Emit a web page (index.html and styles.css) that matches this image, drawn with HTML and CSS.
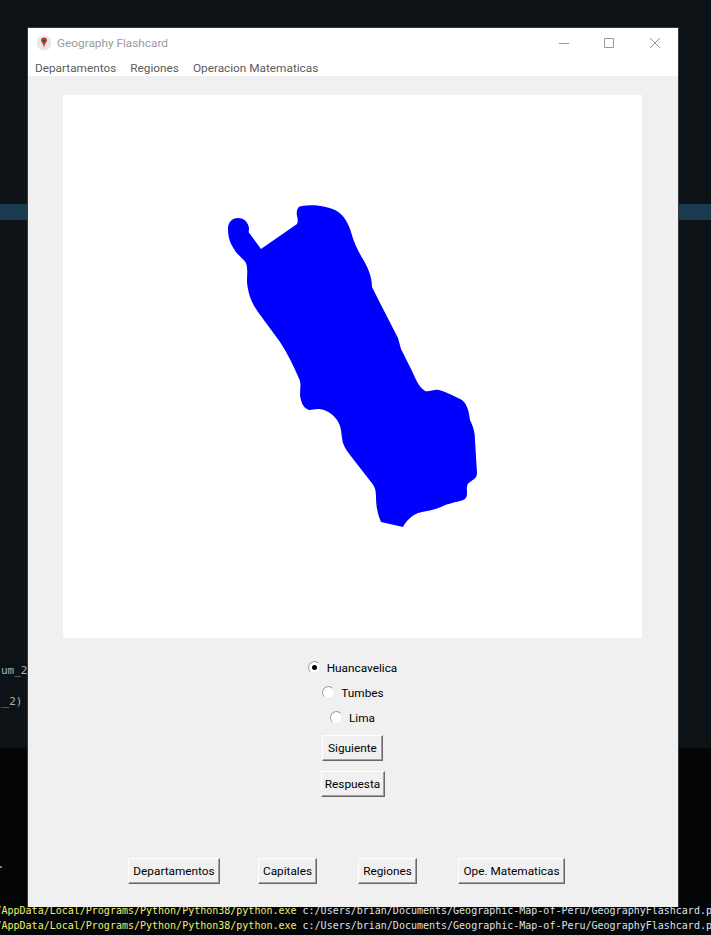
FILE: index.html
```html
<!DOCTYPE html>
<html lang="es">
<head>
<meta charset="utf-8">
<title>Geography Flashcard</title>
<link rel="stylesheet" href="styles.css">
</head>
<body>
<div class="desktop">
  <div class="editor">
    <div class="selection-line"></div>
    <div class="code code-a">um_2</div>
    <div class="code code-b"><span class="red">_</span>_2)<span class="blue">-</span></div>
  </div>
  <div class="terminal">
    <div class="prompt-mark"></div>
    <div class="term-line"><span class="yellow">/AppData/Local/Programs/Python/Python38/python.exe</span> c:/Users/brian/Documents/Geographic-Map-of-Peru/GeographyFlashcard.py</div>
    <div class="term-line"><span class="yellow">/AppData/Local/Programs/Python/Python38/python.exe</span> c:/Users/brian/Documents/Geographic-Map-of-Peru/GeographyFlashcard.py</div>
  </div>
</div>

<div class="window">
  <header class="titlebar">
    <svg class="app-icon" width="16" height="16" viewBox="0 0 16 16" aria-hidden="true">
      <circle cx="8" cy="8" r="7.5" fill="#e8e8e8"/>
      <path d="M5 5c0-1.500 1.300-2.500 3-2.500s3 1 3 2.500c0 2-1.500 3-2.500 5.500L8 13l-.5-2.500C6.500 8 5 7 5 5z" fill="#d8301f"/>
      <circle cx="8" cy="5.500" r="1.700" fill="#0f7f90"/>
      <circle cx="8" cy="5.500" r=".7" fill="#0a2a35"/>
    </svg>
    <span class="title-text">Geography Flashcard</span>
    <div class="window-controls">
      <svg class="ctl ctl-min" width="12" height="12" viewBox="0 0 12 12" aria-hidden="true"><path d="M1 6.500h10" stroke="#999" stroke-width="1"/></svg>
      <svg class="ctl ctl-max" width="12" height="12" viewBox="0 0 12 12" aria-hidden="true"><path d="M1.500 1.500h9v9h-9z" fill="none" stroke="#999" stroke-width="1"/></svg>
      <svg class="ctl ctl-close" width="12" height="12" viewBox="0 0 12 12" aria-hidden="true"><path d="M1 1l10 10M11 1L1 11" stroke="#999" stroke-width="1"/></svg>
    </div>
  </header>
  <nav class="menubar">
    <span class="menu-item">Departamentos</span>
    <span class="menu-item">Regiones</span>
    <span class="menu-item">Operacion Matematicas</span>
  </nav>
  <main class="content">
    <div class="canvas">
      <svg class="map" width="579" height="543" viewBox="63 95 579 543" aria-hidden="true">
        <path fill="#0000ff" d="M261 249 L297 224 C298 222 298 220 297 216 C296 210 298 206 302 206 C312 204 326 206 335 210 C343 214 348 222 351 232 C354 243 358 251 364 261 C369 270 372 278 372 287 L380 303 L398 338 L401 349 L412 371 C416 380 419 387 425 391 C430 392 434 389 439 390 C446 392 454 396 462 400 C467 404 469 411 470 420 C473 426 475 432 475 440 L477 473 C477 478 474 479 470 482 C466 484 467 489 467 493 C467 499 464 500 460 501 C452 503 447 504 441 507 C434 510 426 511 418 513 C411 516 406 521 403 527 L381 522 C378 515 376 507 376 497 C376 490 375 487 371 482 L350 455 C345 448 343 445 342 438 C341 430 341 426 337 420 C332 413 325 409 318 409 C313 409 310 411 307 409 C303 407 301 402 300 395 C300 390 301 386 300 381 C295 369 288 354 280 342 L258 312 C251 302 248 293 247 282 C247 274 248 269 246 263 C243 258 238 256 234 249 C230 243 228 237 228 229 C228 222 232 218 238 218 C244 218 248 222 249 228 C249 231 248 232 250 234 Z"/>
      </svg>
    </div>
    <label class="radio radio-first"><span class="radio-dot is-checked"></span><span class="radio-text">Huancavelica</span></label>
    <label class="radio radio-tumbes"><span class="radio-dot"></span><span class="radio-text">Tumbes</span></label>
    <label class="radio radio-lima"><span class="radio-dot"></span><span class="radio-text">Lima</span></label>
    <button class="btn btn-next" type="button">Siguiente</button>
    <button class="btn btn-answer" type="button">Respuesta</button>
    <div class="bottom-row">
      <button class="btn btn-dept" type="button">Departamentos</button>
      <button class="btn btn-cap" type="button">Capitales</button>
      <button class="btn btn-reg" type="button">Regiones</button>
      <button class="btn btn-ope" type="button">Ope. Matematicas</button>
    </div>
  </main>
</div>
</body>
</html>
```
FILE: styles.css
```css
* { box-sizing: border-box; }
html, body { margin: 0; padding: 0; width: 711px; height: 935px; overflow: hidden; background: #030507; }

.desktop { width: 711px; height: 935px; display: flex; flex-direction: column; font-family: "DejaVu Sans Mono", monospace; font-size: 10px; overflow: hidden; }
.editor { height: 748px; background: #0d1217; padding-top: 204px; color: #a9b2bc; display: flex; flex-direction: column; }
.selection-line { height: 16px; background: #1a3a50; }
.code { font-size: 11px; line-height: 14px; padding-left: 1px; white-space: nowrap; }
.code-a { margin-top: 444px; }
.code-b { margin-top: 17px; margin-left: -5px; }
.red { color: #d04040; }
.blue { color: #5a8fb8; padding-left: 4px; }
.terminal { flex: 1; background: #030507; color: #dfe2e6; display: flex; flex-direction: column; padding-top: 156px; position: relative; }
.prompt-mark { position: absolute; left: 0; top: 118px; width: 2px; height: 2px; background: #c06a20; }
.term-line { line-height: 14.5px; white-space: nowrap; height: 14.5px; margin-left: -4.5px; }
.yellow { color: #f0f06c; }

.window { position: absolute; left: 27px; top: 27px; width: 652px; height: 880px; border: 1px solid #34393e; border-bottom: 0; background: #f0f0f0; display: flex; flex-direction: column; font-family: Roboto, "Noto Sans", sans-serif; font-size: 11.8px; }
.titlebar { height: 30px; background: #fff; display: flex; align-items: center; padding-left: 8px; flex: none; }
.app-icon { flex: none; }
.title-text { margin-left: 5px; color: #9a9a9a; }
.window-controls { margin-left: auto; display: flex; align-items: center; padding-right: 17px; gap: 33px; }
.ctl { display: block; flex: none; }
.ctl-close { margin-left: 1px; }
.menubar { height: 18px; background: #fff; display: flex; gap: 14px; padding-left: 7px; padding-top: 2px; color: #5c5c5c; align-items: center; flex: none; }

.content { flex: 1; display: flex; flex-direction: column; align-items: center; color: #000; position: relative; }
.canvas { width: 579px; height: 543px; margin-top: 19px; margin-right: 1px; background: #fff; flex: none; }
.map { display: block; }

.radio { display: flex; align-items: center; gap: 6px; height: 20px; line-height: 20px; flex: none; }
.radio-text { padding-top: 1px; }
.radio-first { margin-top: 19px; margin-right: 1px; }
.radio-tumbes { margin-top: 5px; }
.radio-lima { margin-top: 5px; margin-right: 1px; }
.radio-dot { width: 13px; height: 13px; flex: none; border-radius: 50%; background: #fff; border: 1px solid #9a9a9a; border-right-color: #e4e4e4; border-bottom-color: #e4e4e4; box-shadow: 0 0 0 .5px #f8f8f8; display: flex; align-items: center; justify-content: center; }
.radio-dot.is-checked::after { content: ""; width: 5px; height: 5px; border-radius: 50%; background: #000; }

.btn { font: inherit; color: #000; background: #f0f0f0; height: 26px; padding: 0; border: 1px solid; border-color: #fff #696969 #696969 #fff; box-shadow: inset -1px -1px 0 #a0a0a0; flex: none; }
.btn-next { width: 61px; margin-top: 8px; margin-right: 1px; }
.btn-answer { width: 64px; margin-top: 10px; margin-right: 1px; }
.bottom-row { display: flex; width: 100%; padding-left: 100px; margin-top: 61px; }
.btn-dept { width: 92px; }
.btn-cap { width: 59px; margin-left: 38px; }
.btn-reg { width: 59px; margin-left: 41px; }
.btn-ope { width: 107px; margin-left: 41px; }
```
